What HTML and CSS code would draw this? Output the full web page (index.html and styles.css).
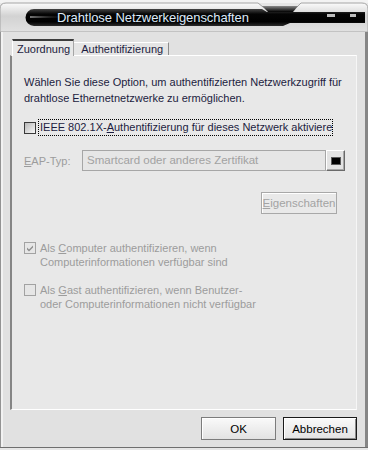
FILE: index.html
```html
<!DOCTYPE html>
<html lang="de">

<head>
    <meta charset="UTF-8">
    <meta name="viewport" content="width=device-width, initial-scale=1.0">
    <title>Drahtlose Netzwerkeigenschaften</title>
    <link rel="stylesheet" href="styles.css">
</head>

<body>
    <div class="window">
        <!-- Titelleiste (Skin) -->
        <svg class="titlebar" width="368" height="32" viewBox="0 0 368 32">
            <defs>
                <linearGradient id="frame" x1="0" y1="0" x2="0" y2="1">
                    <stop offset="0" stop-color="#fbfbfb" />
                    <stop offset="0.45" stop-color="#d2d2d2" />
                    <stop offset="1" stop-color="#e1e1e1" />
                </linearGradient>
                <linearGradient id="bar" x1="0" y1="0" x2="0" y2="1">
                    <stop offset="0" stop-color="#444" />
                    <stop offset="0.3" stop-color="#050505" />
                    <stop offset="0.75" stop-color="#000" />
                    <stop offset="1" stop-color="#2a2a2a" />
                </linearGradient>
                <linearGradient id="notch" x1="0" y1="0" x2="0" y2="1">
                    <stop offset="0" stop-color="#8a8a8a" />
                    <stop offset="1" stop-color="#000" />
                </linearGradient>
                <linearGradient id="shine" x1="0" y1="0" x2="1" y2="0">
                    <stop offset="0" stop-color="#777" />
                    <stop offset="1" stop-color="#000" stop-opacity="0" />
                </linearGradient>
            </defs>
            <rect width="368" height="3" fill="#f3f3f3" />
            <path d="M0 32 V9 Q0 3 6 3 H258 L263 7 H297 L301 3 H362 Q368 3 368 9 V32 Z" fill="url(#frame)"
                stroke="#a4a4a4" stroke-width="1" />
            <path d="M262 6 H298 L293 12 H268 Z" fill="url(#notch)" />
            <path d="M34 9 H262 L267 12 H365 V23 H290 L283 26 H34 A8.5 8.5 0 0 1 34 9 Z" fill="url(#bar)" />
            <rect x="30" y="16" width="40" height="2" fill="url(#shine)" />
            <rect x="327" y="14" width="8" height="3" fill="#bdbdbd" />
            <rect x="350" y="14" width="6" height="3" fill="#bdbdbd" />
            <text x="57" y="21.5" class="title-text" textLength="192">Drahtlose Netzwerkeigenschaften</text>
        </svg>

        <div class="body">
            <div class="tabs">
                <div class="tab active">Zuordnung</div>
                <div class="tab">Authentifizierung</div>
            </div>

            <div class="panel">
                <p class="intro">Wählen Sie diese Option, um authentifizierten Netzwerkzugriff für drahtlose
                    Ethernetnetzwerke zu ermöglichen.</p>

                <div class="check-row first">
                    <span class="box"></span>
                    <span class="focus">IEEE 802.1X-<u>A</u>uthentifizierung für dieses Netzwerk aktiviere</span>
                </div>

                <div class="eap-row">
                    <span class="eap-label"><u>E</u>AP-Typ:</span>
                    <div class="combo">
                        <div class="combo-text">Smartcard oder anderes Zertifikat</div>
                        <div class="combo-btn"><span class="combo-square"></span></div>
                    </div>
                </div>

                <div class="prop-row">
                    <button class="btn disabled"><u>E</u>igenschaften</button>
                </div>

                <div class="check-row disabled-row second">
                    <span class="box off">
                        <svg width="8" height="8" viewBox="0 0 8 8">
                            <path d="M1 3.5 L3 5.5 L7 1.5 V3.5 L3 7.5 L1 5.5 Z" fill="#8e8e8e" />
                        </svg>
                    </span>
                    <span>Als <u>C</u>omputer authentifizieren, wenn<br>Computerinformationen verfügbar sind</span>
                </div>

                <div class="check-row disabled-row third">
                    <span class="box off"></span>
                    <span>Als <u>G</u>ast authentifizieren, wenn Benutzer-<br>oder Computerinformationen nicht
                        verfügbar</span>
                </div>
            </div>

            <div class="buttons">
                <button class="btn">OK</button>
                <button class="btn default">Abbrechen</button>
            </div>
        </div>
    </div>
</body>

</html>
```

FILE: styles.css
```css
body {
    margin: 0;
    width: 368px;
    height: 450px;
    overflow: hidden;
    background: #e6e6e6;
    font-family: "Liberation Sans", Arial, sans-serif;
    font-size: 11px;
    color: #1c1c40;
}

.window {
    width: 368px;
    border-bottom: 1px solid #6f6f6f;
}

.titlebar {
    display: block;
}

.title-text {
    font-family: "Liberation Sans", Arial, sans-serif;
    font-size: 13px;
    fill: #dce9f8;
}

.body {
    height: 415px;
    background: #e1e1e1;
    border-left: 1px solid #939393;
    border-right: 3px solid #868686;
    box-shadow: inset 2px 0 0 #f2f2f2;
    padding: 7px 8px 0 9px;
    box-sizing: border-box;
}

/* Reiter */
.tabs {
    display: flex;
    align-items: flex-end;
    height: 16px;
    padding-left: 2px;
    position: relative;
    z-index: 1;
}

.tab {
    height: 12px;
    padding: 0 5px 0 7px;
    line-height: 12px;
    background: #e5e5e5;
    border-top: 1px solid #ffffff;
    border-right: 1px solid #8c8c8c;
}

.tab.active {
    height: 15px;
    line-height: 17px;
    padding: 0 3px 0 4px;
    background: #e8e8e8;
    border-top: 2px solid #3c3c3c;
    border-left: 1px solid #ffffff;
    border-right: 1px solid #a6a6a6;
    margin-bottom: -1px;
}

/* Registerseite */
.panel {
    height: 355px;
    box-sizing: border-box;
    background: #e8e8e8;
    border-top: 1px solid #ffffff;
    border-left: 2px solid #858585;
    border-right: 1px solid #f6f6f6;
    border-bottom: 1px solid #ffffff;
    padding: 18px 0 0 12px;
}

.intro {
    margin: 0;
    width: 320px;
    line-height: 16px;
}

.check-row {
    display: flex;
    align-items: flex-start;
    gap: 4px;
    line-height: 14px;
}

.check-row.first {
    margin-top: 13px;
    align-items: center;
    gap: 2px;
}

.box {
    width: 10px;
    height: 10px;
    margin-top: 1px;
    border: 1px solid #3a3a3a;
    background: linear-gradient(135deg, #b8b8b8, #f8f8f8);
    flex: none;
    display: flex;
    align-items: center;
    justify-content: center;
}

.check-row.first .box {
    margin-top: 0;
}

.box.off {
    border-color: #a2a2a2;
    background: #e6e6e6;
}

.focus {
    border: 1px dotted #000;
    padding: 0 0 1px 1px;
}

.disabled-row {
    color: #9c9c9c;
}

.check-row.second {
    margin-top: 27px;
}

.check-row.third {
    margin-top: 14px;
}

.eap-row {
    display: flex;
    align-items: center;
    margin-top: 14px;
    color: #9c9c9c;
}

.eap-label {
    width: 58px;
}

.combo {
    display: flex;
    height: 21px;
    width: 263px;
}

.combo-text {
    flex: 1;
    border: 1px solid #a6a6a6;
    background: #e6e6e6;
    padding: 3px 0 0 4px;
    font-size: 11.5px;
    color: #a2a2a2;
}

.combo-btn {
    width: 17px;
    border-top: 1px solid #ffffff;
    border-left: 1px solid #ffffff;
    border-right: 1px solid #6a6a6a;
    border-bottom: 1px solid #6a6a6a;
    box-shadow: inset -1px -1px 0 #a8a8a8;
    background: #e3e3e3;
    display: flex;
    align-items: center;
    justify-content: center;
}

.combo-square {
    width: 8px;
    height: 6px;
    background: #000;
    border: 1px solid #5a5a5a;
    margin-left: 1px;
}

.prop-row {
    display: flex;
    justify-content: flex-end;
    padding-right: 19px;
    margin-top: 21px;
}

/* Schaltflächen */
.btn {
    font-family: "Liberation Sans", Arial, sans-serif;
    font-size: 11.5px;
    color: #000;
    height: 23px;
    padding: 0;
    border: 1px solid #7c7c7c;
    box-shadow: inset 1px 1px 0 #ffffff;
    background: linear-gradient(#fafafa, #e2e2e2);
}

.btn.disabled {
    width: 76px;
    height: 22px;
    color: #a3a3a3;
    border-color: #a8a8a8;
    background: #e9e9e9;
}

.buttons {
    display: flex;
    justify-content: flex-end;
    gap: 7px;
    margin-top: 7px;
}

.buttons .btn {
    width: 75px;
}

.btn.default {
    width: 74px;
    border: 1px solid #1a1a1a;
    box-shadow: inset 1px 1px 0 #ffffff, inset -1px -1px 0 #8a8a8a;
}
```
